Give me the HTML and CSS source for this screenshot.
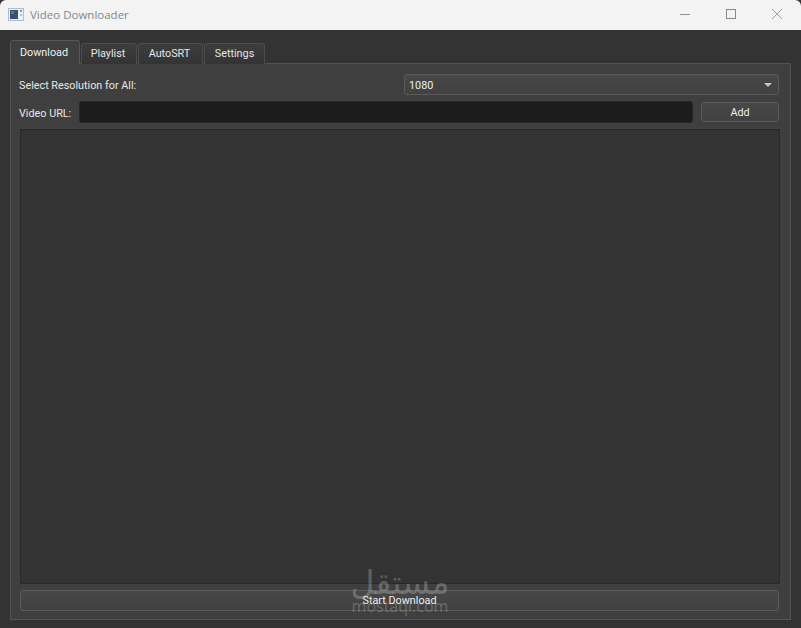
FILE: index.html
```html
<!DOCTYPE html>
<html lang="en">
<head>
<meta charset="utf-8">
<title>Video Downloader</title>
<link rel="stylesheet" href="styles.css">
</head>
<body>
<div class="window">
  <header class="titlebar">
    <svg class="app-icon" width="16" height="15" viewBox="0 0 16 15">
      <rect x="0.5" y="1.5" width="15" height="12" fill="#eef1f4" stroke="#b4bdc5"/>
      <rect x="2" y="3" width="8" height="9" fill="#3a4f74"/>
      <rect x="3" y="4" width="3" height="3" fill="#5b78a6"/>
      <rect x="12" y="3" width="2" height="2" fill="#8a98a6"/>
      <rect x="12" y="7" width="2" height="2" fill="#b5bec7"/>
    </svg>
    <span class="app-title">Video Downloader</span>
    <div class="controls">
      <svg class="ctl" width="12" height="12" viewBox="0 0 12 12"><path d="M1 6.5h10" stroke="#8b949a" fill="none"/></svg>
      <svg class="ctl" width="12" height="12" viewBox="0 0 12 12"><rect x="1.5" y="1.5" width="9" height="9" stroke="#7f8a92" fill="none"/></svg>
      <svg class="ctl" width="12" height="12" viewBox="0 0 12 12"><path d="M1 1l10 10M11 1L1 11" stroke="#8fa9b0" fill="none"/></svg>
    </div>
  </header>
  <main class="content">
    <nav class="tabs">
      <div class="tab tab-active">Download</div>
      <div class="tab tab-playlist">Playlist</div>
      <div class="tab tab-auto">AutoSRT</div>
      <div class="tab tab-settings">Settings</div>
    </nav>
    <section class="pane">
      <div class="row row-res">
        <label class="label label-res">Select Resolution for All:</label>
        <div class="combo">
          <span>1080</span>
          <span class="arrow"></span>
        </div>
      </div>
      <div class="row row-url">
        <label class="label label-url">Video URL:</label>
        <div class="input"></div>
        <button class="btn btn-add" type="button">Add</button>
      </div>
      <div class="list"></div>
      <button class="btn btn-start" type="button">Start Download</button>
    </section>
  </main>
  <div class="watermark">
    <div class="wm-ar" dir="rtl" lang="ar">مستقل</div>
    <div class="wm-en">mostaqi.com</div>
  </div>
</div>
</body>
</html>
```
FILE: styles.css
```css
* { box-sizing: border-box; }
html, body { margin: 0; padding: 0; height: 100%; background: #2d2d2d; }
body { font-family: Roboto, "Liberation Sans", sans-serif; font-size: 10.8px; color: #e8e8e8; overflow: hidden; }
.window { position: relative; width: 801px; height: 628px; display: flex; flex-direction: column; background: #333333; }
.titlebar { height: 30px; flex: none; display: flex; align-items: center; padding-left: 8px; background: #f3f3f3; border-radius: 6px 6px 0 0; }
.app-icon { flex: none; margin-right: 6px; margin-top: -2px; }
.app-title { font-family: "Open Sans", sans-serif; font-size: 11.5px; color: #7c8a93; margin-top: -1px; }
.controls { margin-left: auto; display: flex; gap: 34px; padding-right: 18px; margin-top: -2px; }
.ctl { display: block; }
.content { flex: 1; min-height: 0; display: flex; flex-direction: column; padding: 10px 10px 8px; }
.tabs { display: flex; align-items: flex-end; height: 24px; flex: none; position: relative; z-index: 1; margin-bottom: -1px; }
.tab { height: 21px; display: flex; align-items: center; justify-content: center; margin-left: 1px; background: linear-gradient(#3c3c3c, #343434); border: 1px solid #4c4c4c; border-bottom: 0; border-radius: 3px 3px 0 0; color: #e6e6e6; padding-bottom: 2px; }
.tab-active { width: 70px; height: 24px; margin-left: 0; background: #3f3f3f; border-color: #565656; color: #f0f0f0; padding-bottom: 0; padding-right: 2px; }
.tab-playlist { width: 56px; padding-right: 2px; }
.tab-auto { width: 65px; padding-right: 2px; }
.tab-settings { width: 61px; }
.pane { flex: 1; min-height: 0; display: flex; flex-direction: column; padding: 10px 11px 8px 9px; background: #3f3f3f; border: 1px solid #545454; }
.row { display: flex; align-items: center; flex: none; }
.row-res { height: 21px; }
.row-url { height: 22px; margin-top: 6px; }
.label { color: #e8e8e8; margin-left: -1px; padding-top: 2px; white-space: nowrap; }
.label-res { width: 385px; }
.label-url { width: 60px; }
.combo { flex: 1; height: 21px; display: flex; align-items: center; justify-content: space-between; padding: 2px 6px 0 4px; background: linear-gradient(#484848, #414141); border: 1px solid #5a5a5a; border-radius: 3px; color: #eeeeee; }
.arrow { width: 0; height: 0; margin-top: -2px; border-left: 4px solid transparent; border-right: 4px solid transparent; border-top: 4px solid #c4c4c4; }
.input { flex: 1; height: 22px; background: #1c1c1c; border: 1px solid #262626; border-radius: 3px; }
.btn { font: inherit; color: #f0f0f0; background: linear-gradient(#484848, #414141); border: 1px solid #5a5a5a; border-radius: 3px; padding: 0; }
.btn-add { width: 78px; height: 20px; margin-left: 8px; }
.list { flex: 1; min-height: 0; margin-top: 6px; margin-right: -1px; background: #333333; border: 1px solid #292929; }
.btn-start { height: 21px; margin-top: 6px; flex: none; }
.watermark { position: absolute; left: 340px; top: 566px; width: 120px; display: flex; flex-direction: column; align-items: center; pointer-events: none; color: rgba(255, 255, 255, 0.22); }
.wm-ar { font-family: "DejaVu Sans", sans-serif; font-size: 33px; line-height: 33px; }
.wm-en { font-family: "Open Sans", sans-serif; font-size: 16px; line-height: 15px; }
```
